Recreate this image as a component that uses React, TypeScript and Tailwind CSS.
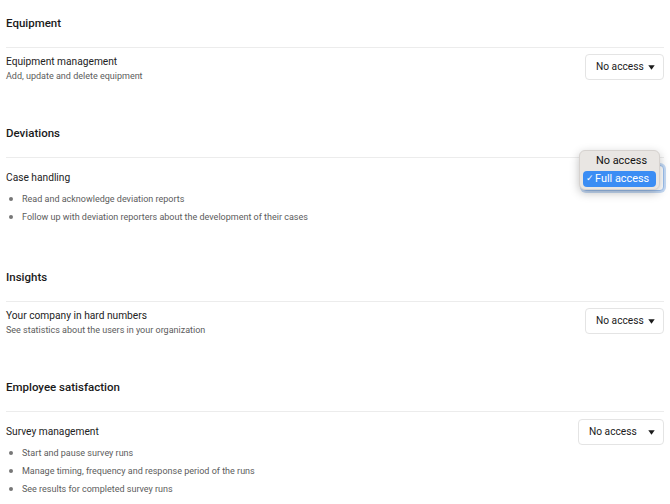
import type { ReactNode } from "react";

type Row = {
  title: string;
  sub?: string;
  bullets?: string[];
  selectW: string;
  open?: boolean;
};

type Section = { heading: string; row: Row };

const SECTIONS: Section[] = [
  {
    heading: "Equipment",
    row: {
      title: "Equipment management",
      sub: "Add, update and delete equipment",
      selectW: "w-[79px]",
    },
  },
  {
    heading: "Deviations",
    row: {
      title: "Case handling",
      bullets: [
        "Read and acknowledge deviation reports",
        "Follow up with deviation reporters about the development of their cases",
      ],
      selectW: "w-[82px]",
      open: true,
    },
  },
  {
    heading: "Insights",
    row: {
      title: "Your company in hard numbers",
      sub: "See statistics about the users in your organization",
      selectW: "w-[79px]",
    },
  },
  {
    heading: "Employee satisfaction",
    row: {
      title: "Survey management",
      bullets: [
        "Start and pause survey runs",
        "Manage timing, frequency and response period of the runs",
        "See results for completed survey runs",
      ],
      selectW: "w-[86px]",
    },
  },
];

function Caret() {
  return (
    <svg width="7" height="5" viewBox="0 0 7 5" className="shrink-0">
      <path d="M0.3 0.3h6.4L3.5 4.7z" fill="#1a1a1a" />
    </svg>
  );
}

function Select({ w, open }: { w: string; open?: boolean }) {
  return (
    <div className="relative shrink-0">
      <div
        className={`${w} flex h-[26px] items-center justify-between rounded-[4px] border bg-white pl-[10px] pr-[8px] text-[10.2px] text-[#1a1a1a] ${
          open ? "border-[#9cc0ef] ring-2 ring-[#c5daf5]" : "border-[#e4e4e4]"
        }`}
      >
        <span>No access</span>
        <Caret />
      </div>
      {open && (
        // native select popup, drawn over the control
        <div className="absolute left-[-3px] top-[-15px] w-[81px] rounded-[6px] border border-[#d6d2cf] bg-[#e9e6e3] px-[3px] pb-[2px] pt-[3px] text-[10.9px] text-[#111] shadow-[0_3px_10px_rgba(0,0,0,0.25)]">
          <div className="flex h-[15px] items-center pl-[13px]">No access</div>
          <div className="mt-[2px] flex h-[16px] items-center rounded-[4px] bg-[#3b8df4] text-white">
            <span className="w-[12px] pl-[3px] text-[9px]">✓</span>
            <span>Full access</span>
          </div>
        </div>
      )}
    </div>
  );
}

function Bullets({ items }: { items: string[] }) {
  return (
    <ul className="mt-[-1px]">
      {items.map((t) => (
        <li key={t} className="flex items-center text-[9px] leading-[18px] text-[#5c5c5c]">
          <span className="ml-[3px] mr-[9.5px] h-[3.5px] w-[3.5px] shrink-0 rounded-full bg-[#777]" />
          {t}
        </li>
      ))}
    </ul>
  );
}

function SectionBlock({ s, first }: { s: Section; first: boolean }): ReactNode {
  const r = s.row;
  return (
    <section className={first ? "pt-[11px]" : "pt-[39px]"}>
      <h2 className="mb-[12px] text-[11.5px] font-medium leading-6 text-[#1a1a1a]">{s.heading}</h2>
      <div className="border-t border-[#ececec]">
        {r.bullets ? (
          <div className="pt-[7px]">
            <div className="flex items-center justify-between">
              <div className="text-[10.2px] leading-4 text-[#222]">{r.title}</div>
              <Select w={r.selectW} open={r.open} />
            </div>
            <Bullets items={r.bullets} />
          </div>
        ) : (
          <div className="flex items-start justify-between pt-[6px]">
            <div>
              <div className="text-[10.2px] leading-4 text-[#222]">{r.title}</div>
              <div className="text-[9px] leading-3 text-[#5c5c5c]">{r.sub}</div>
            </div>
            <Select w={r.selectW} />
          </div>
        )}
      </div>
    </section>
  );
}

export default function App() {
  return (
    <div className="min-h-[504px] bg-white pl-[6px] pr-[6px] font-['Roboto',sans-serif]">
      {SECTIONS.map((s, i) => (
        <SectionBlock key={s.heading} s={s} first={i === 0} />
      ))}
    </div>
  );
}
